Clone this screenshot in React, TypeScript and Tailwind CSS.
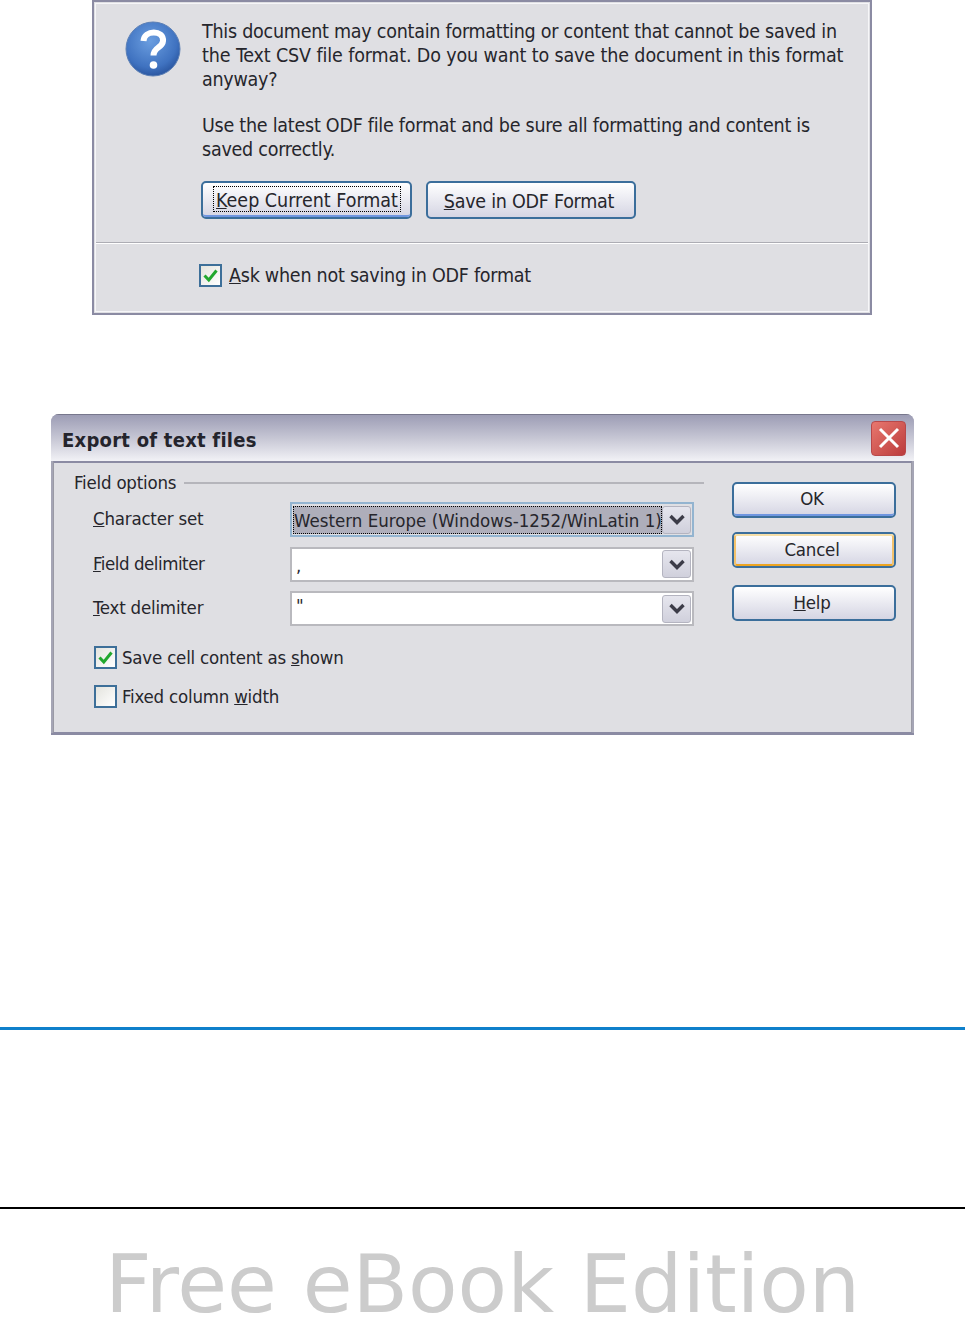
const ui = "font-['DejaVu_Sans_Condensed','DejaVu_Sans',sans-serif] text-[19.5px] text-[#26262c] tracking-[-0.25px]";

function Btn({ className = "", inner = "", children }: { className?: string; inner?: string; children: React.ReactNode }) {
  return (
    <div className={`rounded-[5px] border-2 border-[#3b6e9b] bg-gradient-to-b from-white to-[#d5d5e3] flex items-center justify-center ${className}`}>
      <div className={`w-full h-full flex items-center justify-center rounded-[3px] whitespace-nowrap ${inner}`}>{children}</div>
    </div>
  );
}

function Check({ checked }: { checked: boolean }) {
  return (
    <div className="w-[23px] h-[23px] border-2 border-[#3d6f99] bg-gradient-to-br from-[#e4e4de] to-white flex items-center justify-center shrink-0">
      {checked && (
        <svg width="17" height="15" viewBox="0 0 17 15">
          <path d="M2.5 7.5 L6.8 12 L14.5 2.5" fill="none" stroke="#22a82e" strokeWidth="3" />
        </svg>
      )}
    </div>
  );
}

function Chevron() {
  return (
    <svg width="18" height="13" viewBox="0 0 18 13">
      <path d="M2.5 3 L9 9.5 L15.5 3" fill="none" stroke="#3c3c48" strokeWidth="3.4" />
    </svg>
  );
}

function Drop() {
  return (
    <div className="w-[29px] h-[28px] rounded-[3px] border border-[#b4b4c0] bg-gradient-to-b from-[#e6e6ee] to-[#d0d0dc] flex items-center justify-center shrink-0">
      <Chevron />
    </div>
  );
}

function Row({ label, children, border = "border-[#b9b9be]", bg = "bg-white" }: { label: React.ReactNode; children: React.ReactNode; border?: string; bg?: string }) {
  return (
    <div className="flex items-center h-[35px]">
      <div className="w-[197px] pb-[1px]">{label}</div>
      <div className={`w-[404px] h-[35px] border-2 ${border} ${bg} flex items-center pl-[1px] pr-[1px]`}>{children}</div>
    </div>
  );
}

export default function App() {
  return (
    <div className={`w-[965px] h-[1318px] bg-white overflow-hidden ${ui}`}>
      {/* Top dialog */}
      <div className="ml-[92px] w-[780px] h-[315px] border-2 border-[#8b8ba3] bg-[#dfdfe3] p-[1px]">
        <div className="h-full border border-[#f6f6f8] flex flex-col">
          <div className="flex h-[238px] shrink-0">
            <div className="w-[106px] pl-[28px] pt-[16px] shrink-0">
              <svg width="58" height="58" viewBox="0 0 58 58">
                <defs>
                  <radialGradient id="q" cx="45%" cy="35%" r="70%">
                    <stop offset="0" stopColor="#6b9ee0" />
                    <stop offset="0.7" stopColor="#3f72c0" />
                    <stop offset="1" stopColor="#254f98" />
                  </radialGradient>
                </defs>
                <circle cx="29" cy="29" r="27" fill="url(#q)" stroke="#5b7fb5" strokeWidth="1" />
                <path d="M19.5 21 C20 9.5 40 9.5 39 21 C38.5 28 29.5 27 29.5 35.5" fill="none" stroke="white" strokeWidth="6" />
                <circle cx="29.5" cy="45" r="3.8" fill="white" />
              </svg>
            </div>
            <div className="pt-[16px]">
              <div className="leading-[24px] w-[660px]">
                <div className="whitespace-nowrap">This document may contain formatting or content that cannot be saved in</div>
                <div className="whitespace-nowrap tracking-[-0.12px]">the Text CSV file format. Do you want to save the document in this format</div>
                <div>anyway?</div>
                <div className="mt-[22px] whitespace-nowrap">Use the latest ODF file format and be sure all formatting and content is</div>
                <div>saved correctly.</div>
              </div>
              <div className="flex gap-[14px] mt-[19px] -ml-[1px]">
                <Btn className="w-[211px] h-[38px]" inner="border-b-2 border-[#6f96e0] pl-[10px] pr-[9px] py-[3px]">
                  <div className="w-full h-full border border-dotted border-black flex items-center justify-center leading-none whitespace-nowrap pt-[3px] tracking-[0px]"><span><u>K</u>eep Current Format</span></div>
                </Btn>
                <Btn className="w-[210px] h-[38px]"><span className="pt-[3px] pr-[4px]"><u>S</u>ave in ODF Format</span></Btn>
              </div>
            </div>
          </div>
          <div className="h-[2px] bg-[#adadb4] border-b border-white shrink-0" />
          <div className="flex items-center pl-[103px] gap-[7px] h-[62px]">
            <Check checked />
            <span className="pt-[1px]"><u>A</u>sk when not saving in ODF format</span>
          </div>
        </div>
      </div>

      {/* Export dialog */}
      <div className="mt-[99px] ml-[51px] w-[863px] h-[321px] flex flex-col rounded-t-[8px] bg-[#a5a5b5] overflow-hidden border-b-2 border-[#8b8ba3] text-[18.5px] tracking-[-0.2px]">
        <div className="h-[47px] shrink-0 flex items-center justify-between pl-[11px] pr-[8px] border-t border-[#77778c] bg-gradient-to-b from-[#9d9db5] via-[#c6c6d4] to-[#f2f2f6]">
          <span className="font-bold text-[20px] text-[#24242c] tracking-[0.25px] pt-[3px]">Export of text files</span>
          <div className="w-[35px] h-[35px] rounded-[4px] bg-gradient-to-br from-[#e8776e] to-[#bb3b3d] border border-[#b8484a] flex items-center justify-center">
            <svg width="24" height="24" viewBox="0 0 24 24">
              <path d="M3 3 L21 21 M21 3 L3 21" stroke="white" strokeWidth="3" fill="none" />
            </svg>
          </div>
        </div>
        <div className="flex-1 border border-t-2 border-[#8b8ba3] border-x-[#9a9aa5] mx-[2px] bg-[#dfdfe3] flex">
          <div className="w-[652px] shrink-0 pl-[20px] pt-[7px]">
            <div className="flex items-center gap-[8px] h-[26px] whitespace-nowrap">
              <span>Field options</span>
              <div className="flex-1 mr-[2px] h-[2px] bg-[#b5b5bb]" />
            </div>
            <div className="pl-[19px] mt-[6px] flex flex-col gap-[9.5px]">
              <Row label={<span><u>C</u>haracter set</span>} border="border-[#93b4d0]" bg="bg-[#dfdfe3]">
                <div className="w-[370px] h-[28px] bg-[#aeaeba] border border-dotted border-black flex items-center whitespace-nowrap overflow-hidden leading-none pt-[3px] tracking-[0.03px]">Western Europe (Windows-1252/WinLatin 1)</div>
                <Drop />
              </Row>
              <Row label={<span className="tracking-[-0.45px]"><u>F</u>ield delimiter</span>}>
                <div className="flex-1 pl-[3px] pt-[4px]">,</div>
                <Drop />
              </Row>
              <Row label={<span><u>T</u>ext delimiter</span>}>
                <div className="flex-1 pl-[3px] pb-[5px]">"</div>
                <Drop />
              </Row>
            </div>
            <div className="pl-[20px] mt-[20px] flex flex-col gap-[16px]">
              <div className="flex items-center gap-[5px] h-[23px]"><Check checked /><span>Save cell content as <u>s</u>hown</span></div>
              <div className="flex items-center gap-[5px] h-[23px]"><Check checked={false} /><span>Fixed column <u>w</u>idth</span></div>
            </div>
          </div>
          <div className="pl-[26px] pt-[19px] flex flex-col">
            <Btn className="w-[164px] h-[36px]" inner="border-b-2 border-[#6f96e0] pr-[4px]">OK</Btn>
            <Btn className="w-[164px] h-[36px] mt-[14px]" inner="border-2 border-t-[#f6dfa8] border-x-[#f3c26c] border-b-[#eda421] pr-[4px]">Cancel</Btn>
            <Btn className="w-[164px] h-[36px] mt-[17px]"><span className="pr-[4px]"><u>H</u>elp</span></Btn>
          </div>
        </div>
      </div>

      {/* Footer */}
      <div className="mt-[292px] h-[3px] bg-[#0f80cb]" />
      <div className="mt-[177px] h-[2px] bg-black" />
      <div className="pl-[105px] mt-[29px] font-['DejaVu_Sans',sans-serif] tracking-normal text-[81px] leading-[92px] text-[#cccccc] whitespace-nowrap">Free eBook Edition</div>
    </div>
  );
}
